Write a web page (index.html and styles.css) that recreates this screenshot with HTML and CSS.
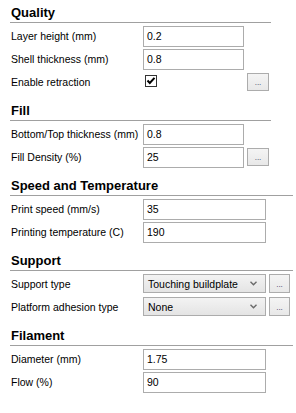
FILE: index.html
```html
<!DOCTYPE html>
<html lang="en">
<head>
    <meta charset="UTF-8">
    <title>Print settings</title>
    <link rel="stylesheet" href="styles.css">
</head>
<body>
    <div class="section narrow">
        <h2>Quality</h2>
        <div class="rows">
            <div class="row">
                <span class="label">Layer height (mm)</span>
                <div class="field">0.2</div>
            </div>
            <div class="row">
                <span class="label">Shell thickness (mm)</span>
                <div class="field">0.8</div>
            </div>
            <div class="row">
                <span class="label">Enable retraction</span>
                <div class="cell">
                    <svg class="check" width="12" height="12" viewBox="0 0 12 12">
                        <rect x="0.5" y="0.5" width="11" height="11" fill="#fff" stroke="#333"/>
                        <path d="M2.5 5.5 L4.8 8 L9.5 2.8" fill="none" stroke="#000" stroke-width="2"/>
                    </svg>
                </div>
                <div class="more">...</div>
            </div>
        </div>
    </div>

    <div class="section narrow">
        <h2>Fill</h2>
        <div class="rows">
            <div class="row">
                <span class="label">Bottom/Top thickness (mm)</span>
                <div class="field">0.8</div>
            </div>
            <div class="row">
                <span class="label">Fill Density (%)</span>
                <div class="field">25</div>
                <div class="more">...</div>
            </div>
        </div>
    </div>

    <div class="section wide">
        <h2>Speed and Temperature</h2>
        <div class="rows">
            <div class="row">
                <span class="label">Print speed (mm/s)</span>
                <div class="field">35</div>
            </div>
            <div class="row">
                <span class="label">Printing temperature (C)</span>
                <div class="field">190</div>
            </div>
        </div>
    </div>

    <div class="section wide">
        <h2>Support</h2>
        <div class="rows">
            <div class="row">
                <span class="label">Support type</span>
                <div class="combo">
                    <span>Touching buildplate</span>
                    <svg width="7" height="5" viewBox="0 0 7 5"><path d="M0.5 0.8 L3.5 3.8 L6.5 0.8" fill="none" stroke="#6a6a6a" stroke-width="1.4"/></svg>
                </div>
                <div class="more">...</div>
            </div>
            <div class="row">
                <span class="label">Platform adhesion type</span>
                <div class="combo">
                    <span>None</span>
                    <svg width="7" height="5" viewBox="0 0 7 5"><path d="M0.5 0.8 L3.5 3.8 L6.5 0.8" fill="none" stroke="#6a6a6a" stroke-width="1.4"/></svg>
                </div>
                <div class="more">...</div>
            </div>
        </div>
    </div>

    <div class="section wide">
        <h2>Filament</h2>
        <div class="rows">
            <div class="row">
                <span class="label">Diameter (mm)</span>
                <div class="field">1.75</div>
            </div>
            <div class="row">
                <span class="label">Flow (%)</span>
                <div class="field">90</div>
            </div>
        </div>
    </div>
</body>
</html>
```

FILE: styles.css
```css
body {
    margin: 0;
    padding: 6px 10px 0;
    background: #fff;
    color: #000;
    font-family: "Liberation Sans", Arial, sans-serif;
    font-size: 10.5px;
}
.section + .section {
    margin-top: 11px;
}
.section.narrow {
    width: 261px;
}
.section.wide {
    width: 283px;
}
.section h2 {
    margin: 0;
    padding: 0 0 2px 1px;
    font-size: 13px;
    line-height: 14px;
    font-weight: bold;
    border-bottom: 1px solid #a0a0a0;
}
.rows {
    display: flex;
    flex-direction: column;
    gap: 2px;
    padding-top: 3px;
}
.row {
    display: flex;
    align-items: flex-start;
    height: 21px;
}
.label {
    width: 132px;
    padding-left: 1px;
    line-height: 21px;
    white-space: nowrap;
}
.field, .cell, .combo {
    box-sizing: border-box;
    width: 101px;
    height: 21px;
}
.wide .field, .wide .combo {
    width: 123px;
}
.field {
    border: 1px solid #acacac;
    padding-left: 3px;
    line-height: 19px;
}
.cell {
    padding: 3px 0 0 2px;
}
.check {
    display: block;
}
.combo {
    display: flex;
    align-items: center;
    justify-content: space-between;
    height: 19px;
    padding: 0 8px 0 4px;
    border: 1px solid #acacac;
    background: linear-gradient(#f3f3f3, #e4e4e4);
}
.more {
    box-sizing: border-box;
    width: 22px;
    height: 18px;
    margin: 1px 0 0 3px;
    border: 1px solid #acacac;
    background: linear-gradient(#f4f4f4, #e8e8e8);
    color: #303060;
    text-align: center;
    font-size: 8px;
    line-height: 18px;
}
.wide .more {
    width: 21px;
    height: 19px;
    margin: 0 0 0 3px;
    line-height: 19px;
}
```
